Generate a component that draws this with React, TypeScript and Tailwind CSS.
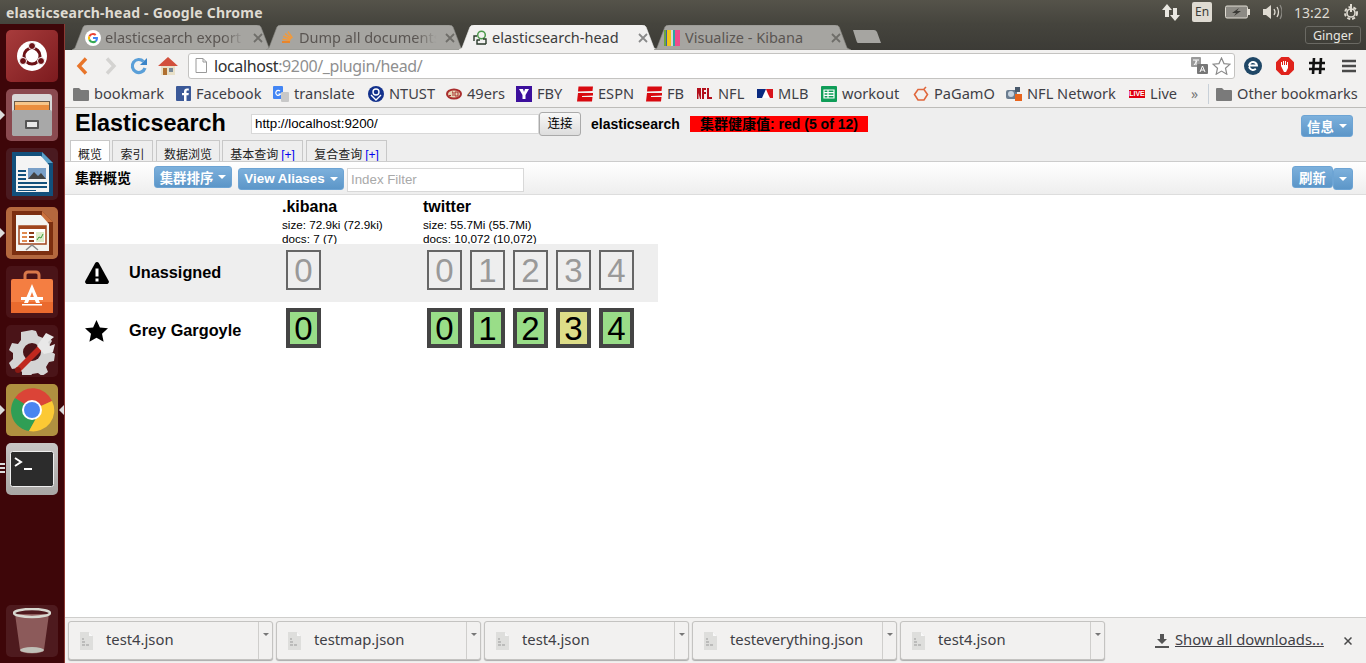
import React from "react";

const ui = "font-['Noto_Sans','Open_Sans',sans-serif]";
const page = "font-['Liberation_Sans','Noto_Sans_CJK_SC',sans-serif]";

function Tile({ cls, pip, children }: { cls: string; pip?: "one" | "both" | "three"; children: React.ReactNode }) {
  return (
    <div className={`relative w-[52px] h-[52px] rounded-[5px] flex items-center justify-center shrink-0 ${cls}`}>
      {children}
      {(pip === "one" || pip === "both") && (
        <span className="absolute -left-[6px] top-[21px] w-0 h-0 border-y-[5px] border-y-transparent border-l-[5px] border-l-[#dcdcdc]" />
      )}
      {pip === "both" && (
        <span className="absolute -right-[6px] top-[21px] w-0 h-0 border-y-[5px] border-y-transparent border-r-[5px] border-r-[#dcdcdc]" />
      )}
      {pip === "three" && (
        <span className="absolute -left-[6px] top-[20px] w-[5px] flex flex-col gap-[2px]">
          <span className="h-[2px] bg-[#dcdcdc]" />
          <span className="h-[2px] bg-[#dcdcdc]" />
          <span className="h-[2px] bg-[#dcdcdc]" />
        </span>
      )}
    </div>
  );
}

function Launcher() {
  return (
    <div className="relative w-[65px] shrink-0 bg-[#3e0609] border-r border-[#8c3a34] flex flex-col items-center pt-[6px] pb-[6px] gap-[7px]">
      <Tile cls="bg-gradient-to-br from-[#a83c3c] to-[#7c1a1e]">
        <svg width="36" height="36" viewBox="0 0 36 36">
          <circle cx="18" cy="18" r="15" fill="#fff" />
          <circle cx="18" cy="18" r="8" fill="none" stroke="#6b1216" strokeWidth="3" />
          <circle cx="18" cy="8" r="3.5" fill="#6b1216" stroke="#fff" strokeWidth="1" />
          <circle cx="9" cy="23" r="3.5" fill="#6b1216" stroke="#fff" strokeWidth="1" />
          <circle cx="27" cy="23" r="3.5" fill="#6b1216" stroke="#fff" strokeWidth="1" />
        </svg>
      </Tile>
      <Tile cls="bg-[#8a4a50]" pip="one">
        <svg width="42" height="44" viewBox="0 0 42 44">
          <rect x="1" y="1" width="40" height="42" rx="3" fill="#d8d8d8" />
          <rect x="3" y="8" width="36" height="10" fill="#6a5a48" />
          <rect x="4" y="9" width="34" height="3" fill="#f6c68a" />
          <rect x="4" y="12" width="34" height="5" fill="#ea8e3e" />
          <rect x="1" y="17" width="40" height="26" rx="2" fill="#a8a8a8" />
          <rect x="14" y="27" width="14" height="9" rx="1" fill="#555" />
          <rect x="16" y="29" width="10" height="5" fill="#e8e8e8" />
        </svg>
      </Tile>
      <Tile cls="bg-[#4a1a20]">
        <svg width="44" height="46" viewBox="0 0 44 46">
          <path d="M2 1h30l11 11v33H2z" fill="#12507c" />
          <path d="M32 1l11 11H32z" fill="#5aa0c8" />
          <path d="M6 5h25l8 9v27H6z" fill="#f4f4f4" />
          <path d="M8 19h8v2H8zM8 23h8v2H8zM8 27h8v2H8zM8 31h29v2H8zM8 35h29v2H8zM8 39h18v1H8z" fill="#12507c" />
          <rect x="18" y="17" width="18" height="11" fill="#7aa0c8" />
          <path d="M18 28l6-7 4 4 3-3 5 6z" fill="#444" />
        </svg>
      </Tile>
      <Tile cls="bg-[#b4683e]" pip="one">
        <svg width="44" height="46" viewBox="0 0 44 46">
          <path d="M2 1h30l11 11v33H2z" fill="#7c2f10" />
          <path d="M32 1l11 11H32z" fill="#c8703c" />
          <path d="M6 5h25l8 9v27H6z" fill="#f4f4f0" />
          <rect x="9" y="16" width="27" height="18" fill="#fff" stroke="#a0451c" strokeWidth="1.5" />
          <rect x="9" y="16" width="27" height="3" fill="#a0451c" />
          <path d="M12 22h5v2h-5zM12 26h5v2h-5zM12 30h5v2h-5z" fill="#e08a50" />
          <path d="M19 22h5v2h-5zM19 26h5v2h-5zM19 30h5v2h-5z" fill="#8a3a18" />
          <rect x="26" y="22" width="8" height="10" fill="#dcebc8" />
          <path d="M27 30l2-3 2 1 2-4" stroke="#3a9a3a" fill="none" />
          <path d="M16 40l6-5 6 5" stroke="#888" strokeWidth="1.5" fill="none" />
        </svg>
      </Tile>
      <Tile cls="bg-[#4a1418]">
        <svg width="44" height="46" viewBox="0 0 44 46">
          <path d="M15 11V6a3 3 0 0 1 3-3h8a3 3 0 0 1 3 3v5" fill="none" stroke="#d8784a" strokeWidth="3" />
          <rect x="1" y="10" width="42" height="34" rx="2" fill="#f47e42" />
          <rect x="1" y="33" width="42" height="11" fill="#ea6a2e" />
          <path d="M22 15l-8 19h4l4-11 4 11h4z" fill="#fff" />
          <rect x="11" y="28" width="22" height="3" fill="#fff" />
          <rect x="12" y="35" width="20" height="1.5" fill="#fff" />
        </svg>
      </Tile>
      <Tile cls="bg-[#4a1418]">
        <svg width="48" height="48" viewBox="0 0 48 48">
          <path d="M24 3l4 1 2 5 5 2 5-2 4 5-3 5 1 5 5 3-1 7-5 1-3 5 2 5-6 4-4-3-6 1-3 5-7-2v-5l-4-4-6 1-3-6 4-4v-6l-4-3 3-7 6 1 3-4V5z" fill="#d4d4d4" />
          <circle cx="24" cy="25" r="9" fill="#4a1418" />
          <path d="M8 41L30 19l4 4-22 22z" fill="#c0281e" />
          <circle cx="10" cy="43" r="3" fill="#8c1a14" />
          <path d="M29 19l9-13 8 4-6 5 2 4 5-2-2 8-9 2z" fill="#e8e8e8" />
        </svg>
      </Tile>
      <Tile cls="bg-[#b09040]" pip="both">
        <svg width="46" height="46" viewBox="0 0 46 46">
          <path d="M23 23L6 11A21 21 0 0 1 43 14z" fill="#db4437" />
          <path d="M6 11A21 21 0 0 0 20 44l10-18z" fill="#2f9e55" />
          <path d="M43 14A21 21 0 0 1 20 44l10-18-7-3z" fill="#fcc934" />
          <circle cx="23" cy="23" r="10" fill="#fff" />
          <circle cx="23" cy="23" r="8" fill="#4a85f0" />
        </svg>
      </Tile>
      <Tile cls="bg-gradient-to-b from-[#c8c6c4] to-[#a8a6a4]" pip="three">
        <svg width="44" height="36" viewBox="0 0 44 36">
          <rect x="0.5" y="0.5" width="43" height="35" rx="2" fill="#2c2c2c" stroke="#eee" />
          <path d="M5 7l6 4-6 4" fill="none" stroke="#fff" strokeWidth="2" />
          <rect x="14" y="17" width="8" height="2" fill="#fff" />
        </svg>
      </Tile>
      <div className="mt-auto">
        <Tile cls="bg-[#4e1a1e]">
          <svg width="38" height="46" viewBox="0 0 38 46">
            <path d="M2 6l5 36a10 3 0 0 0 24 0l5-36z" fill="#8c5a5a" />
            <ellipse cx="19" cy="42" rx="12" ry="3" fill="#c0c0b8" />
            <ellipse cx="19" cy="5" rx="18" ry="4" fill="none" stroke="#d8d8d0" strokeWidth="2.5" />
          </svg>
        </Tile>
      </div>
    </div>
  );
}

function TabShape({ active }: { active?: boolean }) {
  return (
    <svg className="absolute inset-0" width="100%" height="100%" viewBox="0 0 200 25" preserveAspectRatio="none">
      <path
        d="M0 25 L3 23 L11 2 Q12 0 15 0 L184 0 Q187 0 188 2 L196 23 L200 25 Z"
        fill={active ? "#f2f1f0" : "#a6a5a1"}
        stroke={active ? "#f2f1f0" : "#8a8984"}
        strokeWidth="0.6"
      />
    </svg>
  );
}

function ChromeTab({ cls, inner = "pl-[13px]", gap = "ml-[4px]", icon, title, active, fade }: { cls: string; inner?: string; gap?: string; icon: React.ReactNode; title: string; active?: boolean; fade?: boolean }) {
  return (
    <div className={`relative h-[25px] shrink-0 ${cls}`}>
      <TabShape active={active} />
      <div className={`relative flex items-center h-full pr-[10px] ${inner}`}>
        <span className="w-[16px] h-[16px] shrink-0 flex items-center justify-center">{icon}</span>
        <span className={`${gap} text-[14.5px] flex-1 whitespace-nowrap overflow-hidden ${fade ? "[mask-image:linear-gradient(to_right,black_82%,transparent_97%)]" : ""} ${active ? "text-[#3c3c3c]" : "text-[#5a5552]"}`}>{title}</span>
        <svg className="ml-[4px] shrink-0" width="10" height="10" viewBox="0 0 10 10">
          <path d="M1 1l8 8M9 1l-8 8" stroke={active ? "#8a8a8a" : "#6f6e6a"} strokeWidth="1.8" />
        </svg>
      </div>
    </div>
  );
}

const GIcon = (
  <svg width="16" height="16" viewBox="0 0 16 16">
    <circle cx="8" cy="8" r="8" fill="#fff" />
    <path d="M8 3a5 5 0 0 1 3.4 1.3l-1.4 1.4A3 3 0 0 0 5.2 7L3.5 5.7A5 5 0 0 1 8 3z" fill="#ea4335" />
    <path d="M3.5 5.7L5.2 7a3 3 0 0 0 0 2L3.5 10.300a5 5 0 0 1 0-4.600z" fill="#fbbc05" />
    <path d="M3.5 10.300L5.200 9A3 3 0 0 0 10 10.400l1.600 1.300A5 5 0 0 1 3.500 10.300z" fill="#34a853" />
    <path d="M13 8a5 5 0 0 1-1.400 3.700L10 10.400A2.500 2.500 0 0 0 10.800 9H8V7h4.900q.1.500.1 1z" fill="#4285f4" />
  </svg>
);

const SOIcon = (
  <svg width="14" height="16" viewBox="0 0 14 16">
    <path d="M2 11h8v2H2z" fill="#e8852c" />
    <path d="M2.500 8.500l8 1.200-.3 1.500-8-1.200zM3.500 5.500l7.500 3-.6 1.400-7.500-3zM5.500 3l6.500 5-.9 1.200-6.500-5zM8.500 1l4.500 6.500-1.200.9-4.500-6.500z" fill="#f29a3c" />
  </svg>
);

const HeadIcon = (
  <svg width="16" height="16" viewBox="0 0 16 16" fill="none">
    <circle cx="9.500" cy="5" r="3.800" stroke="#4c9a4c" strokeWidth="1.500" />
    <path d="M5 9.500V14h9M2 11v-5h3M5 10h3M11 9h3v5" stroke="#2a3a2a" strokeWidth="1.400" />
  </svg>
);

const KibanaIcon = (
  <svg width="16" height="16" viewBox="0 0 16 16">
    <rect x="0" y="0" width="2" height="16" fill="#6fa83a" />
    <rect x="2" y="0" width="1" height="16" fill="#3a5fa8" />
    <rect x="3" y="0" width="4" height="16" fill="#f2c318" />
    <rect x="7" y="0" width="2" height="16" fill="#d8d8d0" />
    <rect x="9" y="0" width="2" height="16" fill="#2aa8a0" />
    <rect x="11" y="0" width="5" height="16" fill="#ee4a8c" />
  </svg>
);

function TabStrip() {
  return (
    <div className={`h-[26px] shrink-0 bg-gradient-to-b from-[#45443d] to-[#3c3b36] flex items-end pl-[7px] pb-0 ${ui}`}>
      <ChromeTab cls="w-[201px]" icon={GIcon} title="elasticsearch export" fade />
      <ChromeTab cls="w-[199px] -ml-[7px]" icon={SOIcon} title="Dump all documents" fade />
      <ChromeTab cls="w-[199px] -ml-[6px]" icon={HeadIcon} title="elasticsearch-head" active />
      <ChromeTab cls="w-[197px] -ml-[4px]" inner="pl-[10px]" gap="ml-[5px]" icon={KibanaIcon} title="Visualize - Kibana" />
      <svg className="ml-[1px] mb-[6px]" width="30" height="15" viewBox="0 0 30 15">
        <path d="M1 1h21q2 0 3 2l4 11H6q-1 0-1.500-2z" fill="#a6a5a1" />
      </svg>
      <div className="ml-auto mr-[5px] mb-[6px] h-[18px] w-[56px] pt-[2px] border border-[#6a6963] rounded-[3px] text-[12.500px] text-[#e8e6e0] flex items-center justify-center">
        Ginger
      </div>
    </div>
  );
}

function Toolbar() {
  return (
    <div className={`h-[29px] shrink-0 bg-[#f2f1f0] flex items-center pt-[2px] ${ui}`}>
      <svg className="ml-[11px]" width="12" height="18" viewBox="0 0 12 18">
        <path d="M10 1.500L3 9l7 7.500" fill="none" stroke="#e8752a" strokeWidth="3.400" />
      </svg>
      <svg className="ml-[17px]" width="12" height="18" viewBox="0 0 12 18">
        <path d="M2 1.500L9 9l-7 7.500" fill="none" stroke="#d4d3d1" strokeWidth="3.400" />
      </svg>
      <svg className="ml-[13px]" width="18" height="18" viewBox="0 0 18 18">
        <path d="M15 11a6.500 6.500 0 1 1-1.500-6.500" fill="none" stroke="#5a9fd8" strokeWidth="3.200" />
        <path d="M17 1v7h-7z" fill="#3a84c8" />
      </svg>
      <svg className="ml-[9px]" width="22" height="20" viewBox="0 0 22 20">
        <path d="M11 1L1 10h3v9h14v-9h3z" fill="#d2503c" />
        <rect x="4" y="10" width="14" height="9" fill="#e8e0c8" />
        <rect x="6" y="12" width="4" height="7" fill="#b07030" />
        <rect x="12" y="12" width="4" height="4" fill="#7a8a98" />
      </svg>
      <div className="ml-[9px] w-[1047px] h-[26px] bg-white border border-[#c4c3c1] rounded-[3px] flex items-center">
        <svg className="ml-[6px]" width="12" height="15" viewBox="0 0 12 15">
          <path d="M1 .500h7l3.500 3.500v10.500H1z" fill="#fff" stroke="#9a9a9a" />
          <path d="M8 .500V4h3.500" fill="none" stroke="#9a9a9a" />
        </svg>
        <span className="ml-[7px] text-[16px] tracking-[-0.38px] whitespace-nowrap">
          <span className="text-[#303030]">localhost</span>
          <span className="text-[#8f8f8f]">:9200/_plugin/head/</span>
        </span>
        <svg className="ml-auto" width="17" height="17" viewBox="0 0 17 17">
          <rect x="0" y="0" width="10" height="10" rx="1" fill="#9a9a9a" />
          <rect x="6" y="7" width="11" height="10" rx="1" fill="#777" />
          <path d="M2 3h6M5 3v5M3 8l3-4" stroke="#fff" strokeWidth="1" fill="none" />
          <path d="M9 15l2.500-6L14 15M10 13h3" stroke="#fff" strokeWidth="1" fill="none" />
        </svg>
        <svg className="ml-[4px] mr-[3px]" width="19" height="18" viewBox="0 0 19 18">
          <path d="M9.500 1l2.500 5.600 6 .6-4.500 4 1.300 6-5.300-3.100-5.300 3.100 1.300-6L1 7.200l6-.6z" fill="#fff" stroke="#8a8a8a" strokeWidth="1.200" />
        </svg>
      </div>
      <svg className="ml-[9px]" width="18" height="18" viewBox="0 0 18 18">
        <circle cx="9" cy="9" r="9" fill="#1f4766" />
        <path d="M5 8.500h8a4 4 0 1 0-1.200 3.300" fill="none" stroke="#fff" strokeWidth="2" />
        <path d="M1 11l4-2M17 7l-3 1" stroke="#1f4766" strokeWidth="1" />
      </svg>
      <svg className="ml-[14px]" width="18" height="18" viewBox="0 0 18 18">
        <path d="M5.300 0h7.400L18 5.300v7.400L12.700 18H5.300L0 12.700V5.300z" fill="#e0231c" />
        <path d="M5 9V5l1 0v3h1V4h1v4h1V4h1v4h1V5h1v6l-2 4H8z" fill="#fff" />
      </svg>
      <svg className="ml-[14px]" width="18" height="18" viewBox="0 0 18 18">
        <path d="M6 1L5 17M13 1l-1 16M1 6h16M1 12h16" stroke="#111" strokeWidth="2.600" />
      </svg>
      <svg className="ml-[16px]" width="14" height="14" viewBox="0 0 14 14">
        <path d="M0 2h14M0 7h14M0 12h14" stroke="#4a4a4a" strokeWidth="2.400" />
      </svg>
    </div>
  );
}

const Folder = () => (
  <svg width="16" height="14" viewBox="0 0 16 14">
    <path d="M0 2q0-1 1-1h5l2 2h7q1 0 1 1v9q0 1-1 1H1q-1 0-1-1z" fill="#7a7a7a" />
  </svg>
);

function Bm({ cls, icon, label }: { cls: string; icon: React.ReactNode; label: string }) {
  return (
    <div className={`flex items-center shrink-0 whitespace-nowrap ${cls}`}>
      <span className="w-[16px] h-[16px] flex items-center justify-center shrink-0">{icon}</span>
      <span className="ml-[5px] text-[14.600px] text-[#3f3f46]">{label}</span>
    </div>
  );
}

const Espn = (
  <svg width="16" height="16" viewBox="0 0 16 16">
    <path d="M1.500 0.500H16l-.5 4.500H15L1 5.500z" fill="#d8090f" />
    <path d="M1 7h15v2.500L5 10v1h10.500l-.5 4.500H0z" fill="#d8090f" />
  </svg>
);

function Bookmarks() {
  return (
    <div className={`h-[29px] shrink-0 bg-[#f2f1f0] border-b border-[#bdbcb9] flex items-center pl-[8px] pt-[2px] ${ui}`}>
      <Bm cls="w-[102px]" icon={<Folder />} label="bookmark" />
      <Bm cls="w-[98px]" icon={
        <svg width="15" height="15" viewBox="0 0 15 15">
          <rect width="15" height="15" rx="1" fill="#3b5998" />
          <path d="M10.500 15V9.300h2l.3-2.300h-2.300V5.600c0-.700.200-1.100 1.100-1.100h1.200v-2q-.8-.1-1.800-.1c-1.800 0-3 1.100-3 3.100V7h-2v2.300h2V15z" fill="#fff" />
        </svg>
      } label="Facebook" />
      <Bm cls="w-[95px]" icon={
        <svg width="16" height="16" viewBox="0 0 16 16">
          <rect x="0" y="0" width="10" height="13" rx="1" fill="#4285f4" />
          <rect x="8" y="6" width="8" height="10" rx="1" fill="#c8c8c8" />
          <path d="M7 5a2.500 2.500 0 1 0 .500 3H5.500" fill="none" stroke="#fff" strokeWidth="1.200" />
        </svg>
      } label="translate" />
      <Bm cls="w-[78px]" icon={
        <svg width="16" height="16" viewBox="0 0 16 16">
          <circle cx="8" cy="8" r="8" fill="#13318c" />
          <circle cx="8" cy="6" r="3" fill="none" stroke="#fff" strokeWidth="1.400" />
          <path d="M3 9l5 5 5-5" fill="none" stroke="#fff" strokeWidth="1.400" />
        </svg>
      } label="NTUST" />
      <Bm cls="w-[70px]" icon={
        <svg width="16" height="12" viewBox="0 0 16 12">
          <ellipse cx="8" cy="6" rx="8" ry="5.500" fill="#a92d2d" />
          <ellipse cx="8" cy="6" rx="6" ry="3.500" fill="#e8d8b8" />
          <path d="M3 7.500h2M6 4h1v4M9 4h3v4H9z" stroke="#a92d2d" fill="none" />
        </svg>
      } label="49ers" />
      <Bm cls="w-[61px]" icon={
        <svg width="16" height="16" viewBox="0 0 16 16">
          <rect width="16" height="16" fill="#3c0f9c" />
          <path d="M3 3h4l1 3 1-3h4l-3.500 6v4h-3V9z" fill="#fff" />
        </svg>
      } label="FBY" />
      <Bm cls="w-[69px]" icon={Espn} label="ESPN" />
      <Bm cls="w-[51px]" icon={Espn} label="FB" />
      <Bm cls="w-[60px]" icon={
        <svg width="16" height="11" viewBox="0 0 16 11">
          <path d="M0 0h4v11H3L1.500 5v6H0zM5 0h4v2H7v2h2v2H7v5H5zM10 0h2v9h3v2h-5z" fill="#b3101c" />
        </svg>
      } label="NFL" />
      <Bm cls="w-[64px]" icon={
        <svg width="16" height="9" viewBox="0 0 16 9">
          <rect width="16" height="9" fill="#fff" />
          <path d="M0 0h9L5 9H0z" fill="#0a2a80" />
          <path d="M9 0h7v9h-3L11 5z" fill="#d8141c" />
        </svg>
      } label="MLB" />
      <Bm cls="w-[92px]" icon={
        <svg width="16" height="16" viewBox="0 0 16 16">
          <rect width="16" height="16" rx="1" fill="#0f9d58" />
          <path d="M3 4h10v8H3zM3 6.700h10M3 9.300h10M7 4v8" fill="none" stroke="#fff" strokeWidth="1.200" />
        </svg>
      } label="workout" />
      <Bm cls="w-[93px]" icon={
        <svg width="16" height="16" viewBox="0 0 16 16" fill="none">
          <path d="M5 3.500h6l3.500 5-3.500 5.500H5L1.500 8.500z" stroke="#e0673c" strokeWidth="1.600" />
          <path d="M11 3l2-2" stroke="#e0673c" strokeWidth="1.600" />
        </svg>
      } label="PaGamO" />
      <Bm cls="w-[123px]" icon={
        <svg width="16" height="16" viewBox="0 0 16 16">
          <rect x="0" y="4" width="11" height="9" rx="2" fill="#6a7c90" />
          <circle cx="5" cy="8" r="3" fill="#c8d4e0" />
          <rect x="9" y="8" width="7" height="7" fill="#e8641c" />
          <rect x="9" y="1" width="5" height="5" fill="#4a5a6c" />
        </svg>
      } label="NFL Network" />
      <Bm cls="w-[62px]" icon={
        <div className="w-[16px] h-[8px] bg-[#e0000f] text-white text-[7px] leading-[8px] font-bold text-center font-['Liberation_Sans',sans-serif]">LIVE</div>
      } label="Live" />
      <span className="text-[14px] text-[#777] w-[17px] leading-none">»</span>
      <div className="w-px h-[20px] bg-[#c8d0d8]" />
      <div className="ml-[7px]">
        <Bm cls="" icon={<Folder />} label="Other bookmarks" />
      </div>
    </div>
  );
}

function Caret({ cls = "border-t-white border-x-[4px] border-t-[4px]" }: { cls?: string }) {
  return <span className={`inline-block w-0 h-0 border-x-transparent ${cls}`} />;
}

const blueBtn = "bg-gradient-to-b from-[#7cb0dc] to-[#5c96c8] border border-[#6da4d4] rounded-[3px] text-white font-bold text-[13.400px] flex items-center justify-center";

function AppTab({ cls, label, plus, active }: { cls: string; label: string; plus?: boolean; active?: boolean }) {
  return (
    <div className={`h-[21px] pt-[8px] border border-b-0 border-[#c8c8c8] text-[12px] text-[#222] flex items-center justify-center whitespace-nowrap shrink-0 ${active ? "bg-white" : "bg-[#eeeeee]"} ${cls}`}>
      {label}
      {plus && <span className="ml-[3px] text-[#0000ee] text-[12px]">[+]</span>}
    </div>
  );
}

function Shard({ n, state }: { n: number; state: "un" | "g" | "y" }) {
  const c =
    state === "un"
      ? "border-[2px] border-[#666666] text-[#999999]"
      : state === "g"
        ? "border-[4px] border-[#444444] bg-[#99dd88] text-black"
        : "border-[4px] border-[#444444] bg-[#dddd88] text-black";
  return (
    <div className={`w-[35px] h-[40px] box-border flex items-center justify-center text-[33px] leading-none shrink-0 ${c}`}>{n}</div>
  );
}

function IndexHead({ cls, name, size, docs }: { cls: string; name: string; size: string; docs: string }) {
  return (
    <div className={`shrink-0 ${cls}`}>
      <div className="text-[16px] font-bold leading-[18px] text-black">{name}</div>
      <div className="text-[11.700px] leading-[13px] mt-[2px] text-black">{size}</div>
      <div className="text-[11.700px] leading-[13px] mt-[1px] text-black">{docs}</div>
    </div>
  );
}

function Row({ cls, icon, name, state }: { cls: string; icon: React.ReactNode; name: string; state: "un" | "ok" }) {
  return (
    <div className={`h-[58px] w-[593px] flex items-center ${cls}`}>
      <div className="w-[64px] pl-[20px] shrink-0 flex items-center">{icon}</div>
      <div className="w-[157px] shrink-0 text-[16.300px] font-bold text-black whitespace-nowrap -mt-[2px]">{name}</div>
      <div className="w-[141px] shrink-0 self-start mt-[6px]">
        <Shard n={0} state={state === "un" ? "un" : "g"} />
      </div>
      <div className="flex gap-[8px] self-start mt-[6px]">
        {[0, 1, 2, 3, 4].map((i) => (
          <Shard key={i} n={i} state={state === "un" ? "un" : i === 3 ? "y" : "g"} />
        ))}
      </div>
    </div>
  );
}

function AppPage() {
  return (
    <div className={`flex-1 min-h-0 bg-white flex flex-col ${page}`}>
      <div className="h-[53px] bg-[#eeeeee] shrink-0 flex flex-col">
        <div className="h-[32px] flex items-center pl-[10px] pr-[13px] shrink-0">
          <div className="w-[176px] text-[23.400px] font-bold text-black leading-none shrink-0">Elasticsearch</div>
          <div className="w-[288px] h-[20px] bg-white border border-[#d8d8d8] text-[13.300px] text-black pl-[3px] flex items-center shrink-0">http://localhost:9200/</div>
          <div className="w-[42px] h-[24px] bg-gradient-to-b from-[#f8f8f8] to-[#dddddd] border border-[#aaaaaa] rounded-[3px] text-[12.500px] text-black flex items-center justify-center shrink-0">连接</div>
          <div className="ml-[10px] w-[99px] text-[14px] font-bold text-black shrink-0">elasticsearch</div>
          <div className="w-[178px] h-[16px] bg-[#ff0000] text-[14px] font-bold text-black leading-[16px] text-center whitespace-nowrap shrink-0">集群健康值: red (5 of 12)</div>
          <div className={`ml-auto w-[52px] h-[22px] gap-[5px] mt-[4px] ${blueBtn}`}><span className="pt-[4px]">信息</span><Caret /></div>
        </div>
        <div className="flex-1 flex items-end pl-[5px]">
          <AppTab cls="w-[40px]" label="概览" active />
          <AppTab cls="w-[41px] ml-[2px]" label="索引" />
          <AppTab cls="w-[64px] ml-[3px]" label="数据浏览" />
          <AppTab cls="w-[81px] ml-[2px]" label="基本查询" plus />
          <AppTab cls="w-[81px] ml-[3px]" label="复合查询" plus />
        </div>
      </div>
      <div className="h-[34px] shrink-0 bg-gradient-to-b from-white to-[#eeeeee] border-t border-b border-t-[#cccccc] border-b-[#dddddd] flex items-center pl-[10px] pr-[13px]">
        <div className="w-[79px] text-[14px] font-bold text-black shrink-0">集群概览</div>
        <div className={`w-[78px] h-[22px] gap-[5px] shrink-0 -mt-[2px] ${blueBtn}`}><span className="pt-[4px]">集群排序</span><Caret /></div>
        <div className={`ml-[6px] w-[106px] h-[22px] gap-[5px] shrink-0 mt-[2px] ${blueBtn}`}>View Aliases<Caret /></div>
        <div className="ml-[3px] w-[177px] h-[24px] mt-[4px] bg-white border border-[#d8d8d8] text-[13.300px] text-[#a9a9a9] pl-[3px] flex items-center shrink-0">Index Filter</div>
        <div className={`ml-auto w-[41px] h-[22px] shrink-0 -mt-[2px] ${blueBtn}`}><span className="pt-[4px]">刷新</span></div>
        <div className={`w-[20px] h-[22px] shrink-0 mt-[2px] ${blueBtn}`}><Caret /></div>
      </div>
      <div className="flex h-[49px] pl-[217px] pt-[3px] shrink-0">
        <IndexHead cls="w-[141px]" name=".kibana" size="size: 72.9ki (72.9ki)" docs="docs: 7 (7)" />
        <IndexHead cls="w-[200px]" name="twitter" size="size: 55.7Mi (55.7Mi)" docs="docs: 10,072 (10,072)" />
      </div>
      <Row
        cls="bg-[#eeeeee]"
        state="un"
        name="Unassigned"
        icon={
          <svg width="24" height="22" viewBox="0 0 24 22">
            <path d="M12 0q1.200 0 1.800 1L23.700 19q.8 2-1.200 3H1.500q-2-1-1.200-3L10.200 1Q10.800 0 12 0z" fill="#000" />
            <rect x="10.500" y="6.500" width="3" height="8" fill="#fff" />
            <rect x="10.500" y="16.500" width="3" height="3" fill="#fff" />
          </svg>
        }
      />
      <Row
        cls=""
        state="ok"
        name="Grey Gargoyle"
        icon={
          <svg width="23" height="22" viewBox="0 0 23 22">
            <path d="M11.500 0l3.400 7.400 8.100.9-6 5.500 1.600 8-7.100-4-7.100 4 1.600-8-6-5.500 8.100-.9z" fill="#000" />
          </svg>
        }
      />
    </div>
  );
}

function DlItem({ name }: { name: string }) {
  return (
    <div className="w-[205px] h-[39px] shrink-0 bg-[#f2f1f0] border border-[#c4c3c1] rounded-[3px] shadow-[0_1px_1px_#aaa] flex items-center">
      <svg className="ml-[10px] shrink-0" width="15" height="18" viewBox="0 0 15 18">
        <path d="M1 0h9l4 4v14H1z" fill="#dededc" />
        <path d="M10 0v4h4z" fill="#f8f8f8" />
        <path d="M3 7h2M3 10h3M3 13h3M7 13h3" stroke="#999" strokeWidth="1" />
      </svg>
      <span className="ml-[12px] -mt-[2px] text-[14.800px] text-[#3f3f46] flex-1 whitespace-nowrap">{name}</span>
      <div className="w-[14px] h-full border-l border-[#cfcecc] flex items-start justify-center pt-[11px] shrink-0">
        <Caret cls="border-t-[#777777] border-x-[3px] border-t-[3px]" />
      </div>
    </div>
  );
}

function Shelf() {
  return (
    <div className={`h-[46px] shrink-0 bg-[#f2f1f0] border-t border-[#cfcecc] flex items-center pl-[3px] gap-[3px] ${ui}`}>
      <DlItem name="test4.json" />
      <DlItem name="testmap.json" />
      <DlItem name="test4.json" />
      <DlItem name="testeverything.json" />
      <DlItem name="test4.json" />
      <svg className="ml-[47px] shrink-0" width="14" height="14" viewBox="0 0 14 14">
        <path d="M5 0h4v5h3l-5 5-5-5h3zM0 12h14v2H0z" fill="#555" />
      </svg>
      <span className="ml-[3px] -mt-[2px] text-[14.800px] text-[#3f3f46] underline whitespace-nowrap">Show all downloads...</span>
      <svg className="ml-[17px] shrink-0" width="8" height="8" viewBox="0 0 8 8">
        <path d="M.5.5l7 7M7.500.5l-7 7" stroke="#4a4a4a" strokeWidth="1.500" />
      </svg>
    </div>
  );
}

function TopBar() {
  return (
    <div className={`h-[24px] shrink-0 bg-gradient-to-b from-[#55534a] to-[#45443d] flex items-center pl-[6px] ${ui}`}>
      <span className="text-[14px] font-bold tracking-[0.2px] text-[#dfdbd2] whitespace-nowrap w-[1156px]">elasticsearch-head - Google Chrome</span>
      <svg width="18" height="17" viewBox="0 0 18 17">
        <path d="M5 0l5 6H7v7H3V6H0zM13 17l-5-6h3V4h4v7h3z" fill="#e8e6e0" />
      </svg>
      <div className="ml-[12px] w-[20px] h-[20px] rounded-[2px] bg-[#dfdbd2] text-[#3c3b37] text-[12px] flex items-center justify-center">En</div>
      <svg className="ml-[13px]" width="26" height="14" viewBox="0 0 26 14">
        <rect x="0.500" y="1" width="22" height="12" rx="1.500" fill="#8c8a84" stroke="#dfdbd2" />
        <rect x="23" y="4" width="2" height="6" fill="#dfdbd2" />
        <path d="M14 3l-7 5h4l-2 3 7-5h-4z" fill="#3c3b37" />
      </svg>
      <svg className="ml-[11px]" width="20" height="16" viewBox="0 0 20 16" fill="none">
        <path d="M1 5h3l5-4v14l-5-4H1z" fill="#dfdbd2" />
        <path d="M12 5q2 3 0 6M15 3q3 5 0 10" stroke="#dfdbd2" strokeWidth="1.300" />
        <path d="M18 1q4 7 0 14" stroke="#8c8a84" strokeWidth="1.200" />
      </svg>
      <span className="ml-[12px] text-[14px] text-[#dfdbd2] w-[49px] whitespace-nowrap">13:22</span>
      <svg width="16" height="16" viewBox="0 0 16 16" fill="none">
        <circle cx="8" cy="9" r="6" stroke="#dfdbd2" strokeWidth="2" strokeDasharray="3 2" />
        <circle cx="8" cy="9" r="4" stroke="#dfdbd2" strokeWidth="1.600" />
        <path d="M8 0v8" stroke="#dfdbd2" strokeWidth="2" />
      </svg>
    </div>
  );
}

export default function App() {
  return (
    <div className="w-[1366px] h-[663px] overflow-hidden flex flex-col bg-white">
      <TopBar />
      <div className="flex flex-1 min-h-0">
        <Launcher />
        <div className="flex-1 min-w-0 flex flex-col">
          <TabStrip />
          <Toolbar />
          <Bookmarks />
          <AppPage />
          <Shelf />
        </div>
      </div>
    </div>
  );
}
